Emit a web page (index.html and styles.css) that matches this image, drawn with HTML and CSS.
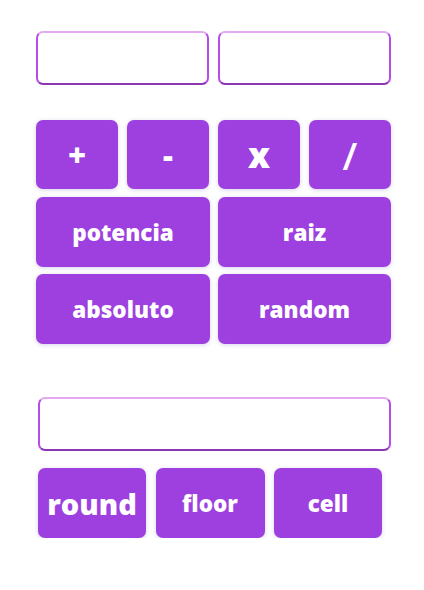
FILE: index.html
```html
<!DOCTYPE html>
<html lang="es">
<head>
<meta charset="utf-8">
<title>Calculadora</title>
<link rel="stylesheet" href="styles.css">
</head>
<body>
<main class="app">
  <div class="inputs">
    <input class="field" type="text">
    <input class="field" type="text">
  </div>
  <div class="ops">
    <button class="btn op-sm">+</button>
    <button class="btn op-sm">-</button>
    <button class="btn op-lg">x</button>
    <button class="btn op-lg op-slash">/</button>
  </div>
  <div class="funcs">
    <button class="btn">potencia</button>
    <button class="btn">raiz</button>
    <button class="btn">absoluto</button>
    <button class="btn">random</button>
  </div>
  <input class="field result" type="text">
  <div class="rounds">
    <button class="btn big">round</button>
    <button class="btn">floor</button>
    <button class="btn">cell</button>
  </div>
</main>
</body>
</html>
```

FILE: styles.css
```css
* { box-sizing: border-box; }
html, body { margin: 0; background: #ffffff; }
body { font-family: "Open Sans", "Liberation Sans", sans-serif; }

.app {
  width: 424px;
  padding: 31px 33px 0 36px;
}

.field {
  display: block;
  height: 54px;
  width: 100%;
  border-style: solid;
  border-width: 2px;
  border-color: #e4aaf1 #b84ce6 #8d36b4 #b84ce6;
  border-radius: 7px;
  background: #fff;
  outline: none;
  padding: 0 10px;
}

.inputs {
  display: grid;
  grid-template-columns: 1fr 1fr;
  column-gap: 9px;
}

.btn {
  border: none;
  border-radius: 7px;
  background: #9d40df;
  color: #ffffff;
  font-family: "Open Sans", "Liberation Sans", sans-serif;
  font-weight: 800;
  font-size: 22.5px;
  padding: 0;
  box-shadow: 0 1px 4px rgba(90, 80, 170, 0.25);
  display: flex;
  align-items: center;
  justify-content: center;
}

.ops {
  margin-top: 35px;
  display: grid;
  grid-template-columns: repeat(4, 82px);
  column-gap: 9px;
  height: 69px;
}

.op-sm { font-size: 31px; font-weight: 800; }
.op-lg { font-size: 35px; }
.op-slash { font-size: 38px; font-weight: 600; }

.funcs {
  margin-top: 8px;
  display: grid;
  grid-template-columns: 174px 173px;
  column-gap: 8px;
  grid-auto-rows: 70px;
  row-gap: 7px;
}

.result {
  margin-top: 53px;
  margin-left: 2px;
  width: 353px;
}

.rounds {
  margin-top: 17px;
  margin-left: 2px;
  display: grid;
  grid-template-columns: 108px 109px 108px;
  column-gap: 9.5px;
  height: 70px;
}

.big { font-size: 29px; }
```
